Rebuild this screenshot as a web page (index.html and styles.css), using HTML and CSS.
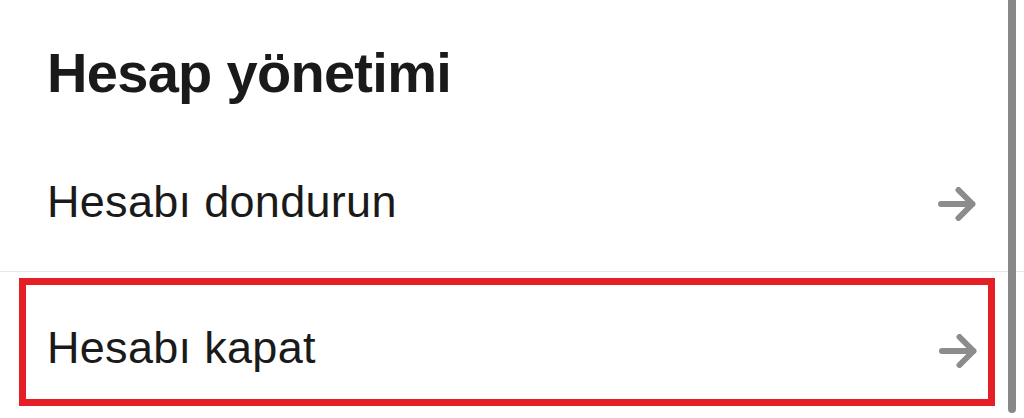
FILE: index.html
```html
<!DOCTYPE html>
<html lang="tr">
<head>
    <meta charset="UTF-8">
    <meta name="viewport" content="width=device-width, initial-scale=1.0">
    <title>Hesap yönetimi</title>
    <link rel="stylesheet" href="styles.css">
</head>
<body>
    <div class="page">
        <h1 class="title">Hesap yönetimi</h1>

        <div class="row">
            <span class="label">Hesabı dondurun</span>
            <svg class="arrow" width="38" height="34" viewBox="0 0 38 34">
                <path d="M3 17 H34.5 M20.5 3 L34.5 17 L20.5 31" />
            </svg>
        </div>

        <div class="row highlighted">
            <span class="label">Hesabı kapat</span>
            <svg class="arrow" width="38" height="34" viewBox="0 0 38 34">
                <path d="M3 17 H34.5 M20.5 3 L34.5 17 L20.5 31" />
            </svg>
        </div>

        <div class="scrollbar"></div>
    </div>
</body>
</html>
```

FILE: styles.css
```css
body {
    margin: 0;
    background-color: #fff;
    font-family: "Liberation Sans", Arial, sans-serif;
    color: #1a1a1a;
}

.page {
    position: relative;
    height: 418px;
    overflow: hidden;
}

.title {
    margin: 0;
    padding: 45px 47px 0;
    height: 140px;
    font-size: 56px;
    line-height: 56px;
    font-weight: bold;
    letter-spacing: -0.7px;
    box-sizing: border-box;
}

.row {
    display: flex;
    align-items: center;
    justify-content: space-between;
    height: 131px;
    padding: 0 48px 0 47px;
    border-bottom: 1px solid #e8e8e8;
}

.label {
    font-size: 45px;
    line-height: 45px;
    letter-spacing: 0.3px;
    margin-bottom: 9px;
}

.arrow {
    margin-bottom: 3px;
    fill: none;
    stroke: #8c8c8c;
    stroke-width: 6;
    stroke-linecap: round;
    stroke-linejoin: round;
}

.highlighted {
    height: 114px;
    margin: 6px 29px 0 19px;
    padding: 0 11px 0 21px;
    border: 7px solid #e41f26;
}

.highlighted .label {
    margin: 11px 0 0;
}

.highlighted .arrow {
    margin: 18px 0 0;
}

.scrollbar {
    position: absolute;
    top: -10px;
    right: 8px;
    width: 8px;
    height: 423px;
    border-radius: 4px;
    background-color: #888;
}
```
